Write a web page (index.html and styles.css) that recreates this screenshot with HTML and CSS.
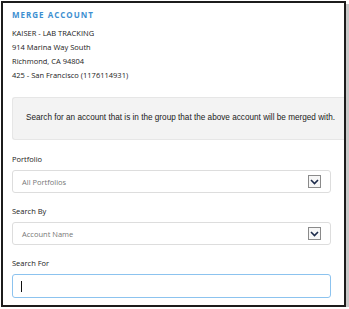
FILE: index.html
```html
<!DOCTYPE html>
<html lang="en">
<head>
    <meta charset="UTF-8">
    <title>Merge Account</title>
    <link rel="stylesheet" href="styles.css">
</head>
<body>
    <div class="frame">
        <h2 class="title">MERGE ACCOUNT</h2>
        <div class="address">
            <p>KAISER - LAB TRACKING</p>
            <p>914 Marina Way South</p>
            <p>Richmond, CA 94804</p>
            <p>425 - San Francisco (1176114931)</p>
        </div>

        <div class="notice">
            Search for an account that is in the group that the above account will be merged with.
        </div>

        <div class="field first">
            <label>Portfolio</label>
            <div class="select">
                <span>All Portfolios</span>
                <span class="arrow">
                    <svg width="9" height="6" viewBox="0 0 9 6"><path d="M1 1 L4.5 4.5 L8 1" fill="none" stroke="#1b2a4a" stroke-width="1.6"/></svg>
                </span>
            </div>
        </div>

        <div class="field">
            <label>Search By</label>
            <div class="select">
                <span>Account Name</span>
                <span class="arrow">
                    <svg width="9" height="6" viewBox="0 0 9 6"><path d="M1 1 L4.5 4.5 L8 1" fill="none" stroke="#1b2a4a" stroke-width="1.6"/></svg>
                </span>
            </div>
        </div>

        <div class="field">
            <label>Search For</label>
            <div class="input"><span class="caret"></span></div>
        </div>
    </div>
</body>
</html>
```

FILE: styles.css
```css
* {
    margin: 0;
    padding: 0;
    box-sizing: border-box;
}

body {
    background: #fff;
    font-family: 'Open Sans', sans-serif;
    color: #222;
}

.frame {
    width: 345px;
    height: 306px;
    margin: 1px 0 0 1px;
    border: 2px solid #1c1c1c;
    box-shadow: 3px 3px 0 #c8c8c8;
    padding: 6px 0 0 9px;
    overflow: hidden;
}

.title {
    font-size: 8px;
    font-weight: bold;
    letter-spacing: 1px;
    color: #3d8fd1;
    line-height: 12px;
}

.address {
    margin-top: 5px;
    font-size: 7.5px;
    line-height: 14px;
}

.notice {
    margin-top: 15px;
    height: 43px;
    background: #f3f3f3;
    border: 1px solid #e6e6e6;
    border-right: none;
    border-radius: 3px 0 0 3px;
    font-family: 'Liberation Sans', Arial, sans-serif;
    font-size: 8.2px;
    padding: 15px 0 0 13px;
    color: #222;
    white-space: nowrap;
}

.field {
    width: 319px;
    margin-top: 13px;
}

.field.first {
    margin-top: 14px;
}

.field label {
    display: block;
    font-size: 7.5px;
    line-height: 10px;
    margin-bottom: 6px;
}

.select {
    height: 23px;
    border: 1px solid #ddd;
    border-radius: 3px;
    display: flex;
    align-items: center;
    justify-content: space-between;
    padding: 0 9px 0 9px;
    font-size: 7.5px;
    color: #777;
}

.arrow {
    width: 13px;
    height: 13px;
    border: 1px solid #8a8a8a;
    background: #f6f6f6;
    display: flex;
    align-items: center;
    justify-content: center;
}

.input {
    height: 24px;
    border: 1px solid #8cc3ef;
    border-radius: 3px;
    display: flex;
    align-items: center;
    padding-left: 8px;
}

.caret {
    width: 1px;
    height: 11px;
    background: #111;
}
```
